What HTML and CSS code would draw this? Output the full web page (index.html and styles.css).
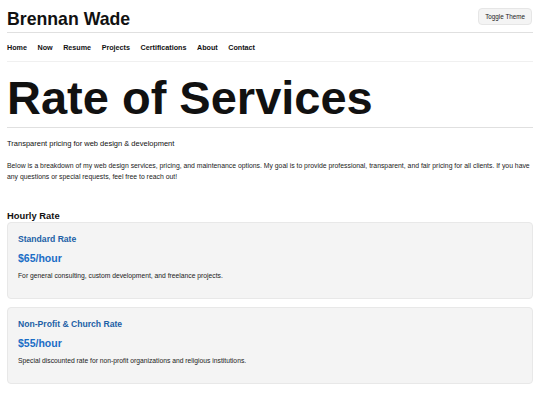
FILE: index.html
```html
<!DOCTYPE html>
<html lang="en">
<head>
    <meta charset="UTF-8">
    <meta name="viewport" content="width=device-width, initial-scale=1.0">
    <title>Rate of Services - Brennan Wade</title>
    <link rel="stylesheet" href="styles.css">
</head>
<body>

    <header class="site-header">
        <div class="brand">Brennan Wade</div>
        <button type="button" class="theme-toggle">Toggle Theme</button>
    </header>

    <nav class="site-nav">
        <a href="#">Home</a>
        <a href="#">Now</a>
        <a href="#">Resume</a>
        <a href="#">Projects</a>
        <a href="#">Certifications</a>
        <a href="#">About</a>
        <a href="#">Contact</a>
    </nav>

    <main>
        <h1 class="page-title">Rate of Services</h1>
        <p class="subtitle">Transparent pricing for web design &amp; development</p>
        <p class="intro">Below is a breakdown of my web design services, pricing, and maintenance options. My goal is to provide professional, transparent, and fair pricing for all clients. If you have any questions or special requests, feel free to reach out!</p>

        <section class="rates">
            <h2>Hourly Rate</h2>

            <div class="rate-card">
                <h3>Standard Rate</h3>
                <div class="price">$65/hour</div>
                <p>For general consulting, custom development, and freelance projects.</p>
            </div>

            <div class="rate-card">
                <h3>Non-Profit &amp; Church Rate</h3>
                <div class="price">$55/hour</div>
                <p>Special discounted rate for non-profit organizations and religious institutions.</p>
            </div>
        </section>
    </main>

</body>
</html>
```

FILE: styles.css
```css
body {
    font-family: "Liberation Sans", Arial, sans-serif;
    margin: 0;
    padding: 0 7px;
    color: #111;
    background-color: #fff;
}
.site-header {
    display: flex;
    justify-content: space-between;
    align-items: center;
    height: 32px;
    border-bottom: 1px solid #e0e0e0;
}
.brand {
    font-size: 17.7px;
    font-weight: bold;
    line-height: 20px;
    padding-top: 6px;
}
.theme-toggle {
    font-family: "Liberation Sans", Arial, sans-serif;
    font-size: 6.3px;
    color: #222;
    background-color: #f4f4f4;
    border: 1px solid #e6e6e6;
    border-radius: 4px;
    padding: 4px 6px;
    margin-right: 1px;
    margin-top: 1px;
    cursor: pointer;
}
.site-nav {
    display: flex;
    gap: 10.5px;
    height: 28px;
    align-items: center;
    border-bottom: 1px solid #f0f0f0;
}
.site-nav a {
    font-size: 7.2px;
    font-weight: bold;
    color: #111;
    text-decoration: none;
}
.page-title {
    font-size: 47px;
    line-height: 49px;
    margin: 11px 0 0;
    padding-bottom: 5px;
    border-bottom: 1px solid #e0e0e0;
}
.subtitle {
    font-size: 7.5px;
    line-height: 9px;
    margin: 11px 0 0;
}
.intro {
    font-size: 6.85px;
    line-height: 11px;
    margin: 12px 0 0;
    color: #222;
}
.rates h2 {
    font-size: 9.4px;
    line-height: 11px;
    margin: 28px 0 1px;
}
.rate-card {
    background-color: #f4f4f4;
    border: 1px solid #e8e8e8;
    border-radius: 4px;
    padding: 11px 10px 18px;
    margin-bottom: 8px;
}
.rate-card h3 {
    font-size: 8.6px;
    line-height: 10px;
    color: #2160a6;
    margin: 0;
}
.rate-card .price {
    font-size: 10.5px;
    line-height: 12px;
    font-weight: bold;
    color: #1a6dc6;
    margin-top: 8px;
}
.rate-card p {
    font-size: 6.75px;
    line-height: 8px;
    margin: 8px 0 0;
    color: #222;
}
```
